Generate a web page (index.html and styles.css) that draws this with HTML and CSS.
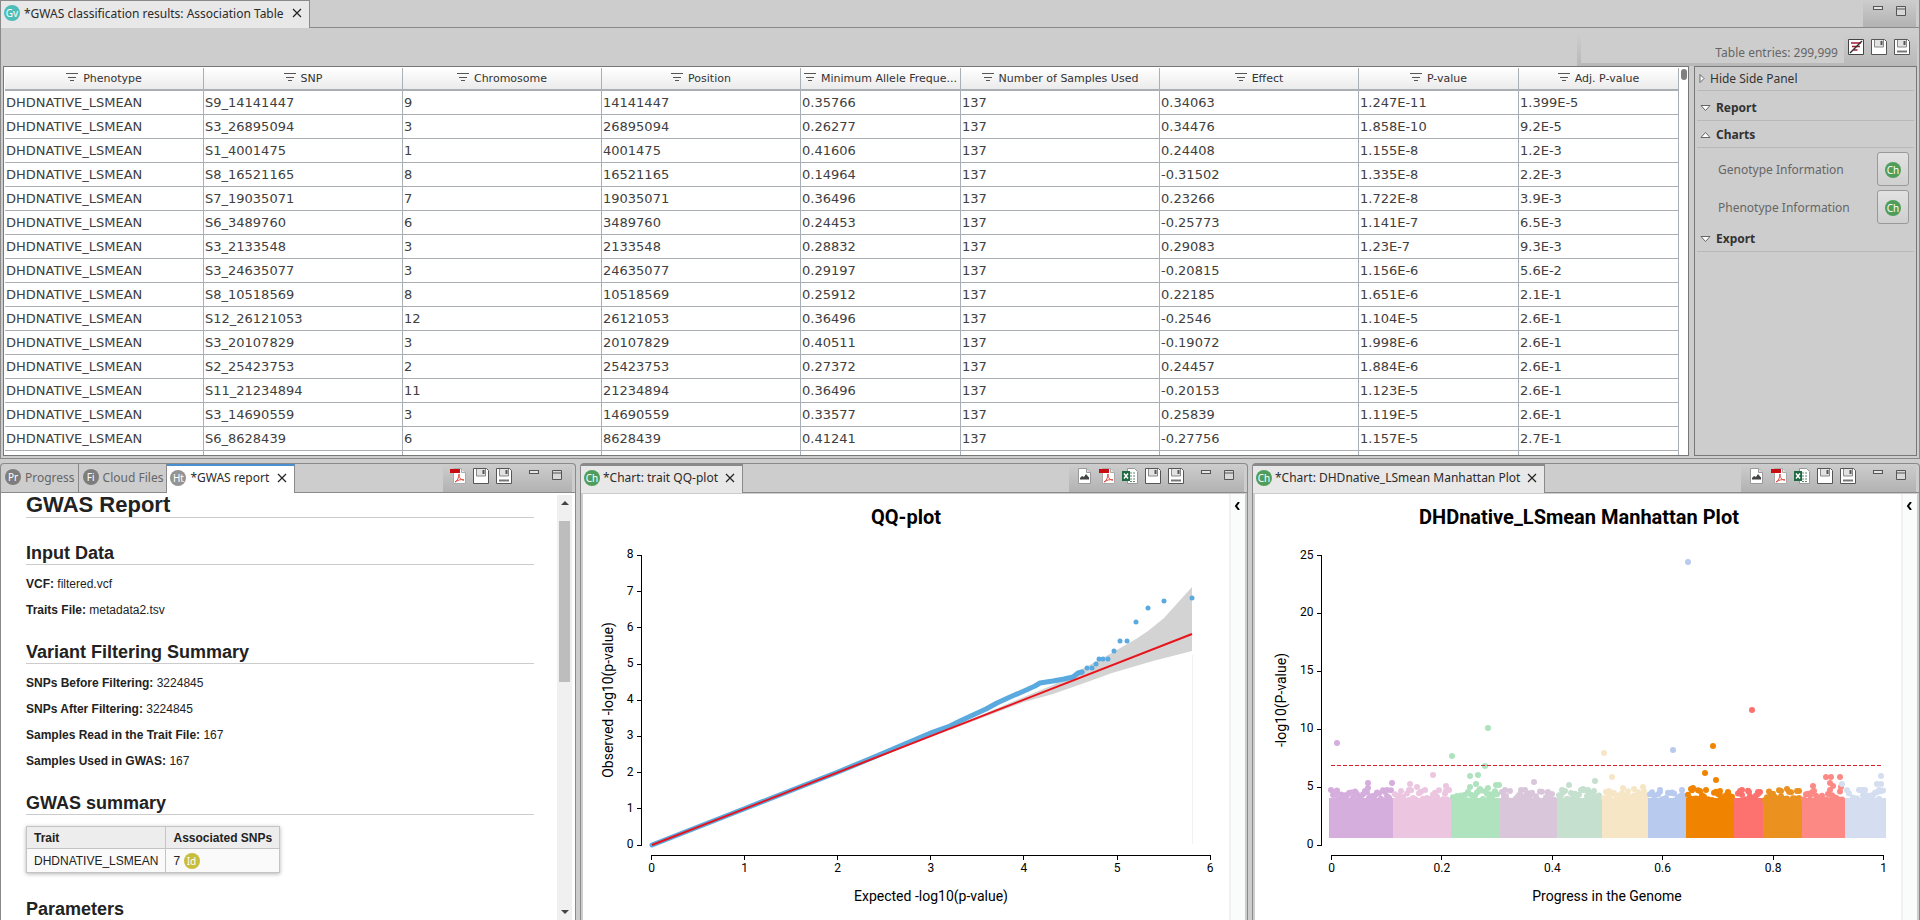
FILE: index.html
```html
<!DOCTYPE html>
<html lang="en">
<head>
    <meta charset="UTF-8">
    <meta name="viewport" content="width=device-width, initial-scale=1.0">
    <title>GWAS classification results</title>
    <link rel="stylesheet" href="styles.css">
</head>
<body>
    <svg class="symbols" aria-hidden="true">
        <symbol id="i-close" viewBox="0 0 10 10"><path d="M1 1l8 8M9 1l-8 8" fill="none" stroke="#222" stroke-width="1.2"/></symbol>
        <symbol id="i-min" viewBox="0 0 16 16"><rect x="3.500" y="2.500" width="9" height="3" fill="#e4e4e4" stroke="#555"/></symbol>
        <symbol id="i-max" viewBox="0 0 16 16"><path d="M3.500 2.500h9v9h-9z" fill="#d8d8d8" stroke="#555"/><path d="M3 5h10" stroke="#555"/></symbol>
        <symbol id="i-save" viewBox="0 0 16 16"><path d="M.5.500h13l2 2v13H.5z" fill="#fff" stroke="#555"/><path d="M3.500 1v7h9V1" fill="#e2e2e2" stroke="#888"/><path d="M10.500 2v4" stroke="#555" stroke-width="2"/></symbol>
        <symbol id="i-saveas" viewBox="0 0 16 16"><path d="M.5.500h13l2 2v13H.5z" fill="#fff" stroke="#555"/><path d="M3.500 1v7h9V1" fill="#e2e2e2" stroke="#888"/><path d="M10.500 2v4" stroke="#555" stroke-width="2"/><path d="M3 12.500h10" stroke="#777" stroke-width="2"/></symbol>
        <symbol id="i-nofilter" viewBox="0 0 16 16"><path d="M.5.500h15v15H.5z" fill="#fff" stroke="#444"/><path d="M3 4h10M4 7.500h8M5.500 11h4" stroke="#a11c2c" stroke-width="1.500"/><path d="M14 2L2 14" stroke="#333" stroke-width="1.500"/></symbol>
        <symbol id="i-image" viewBox="0 0 16 16"><path d="M2.500.500h8l4 4v11h-12z" fill="#fff" stroke="#999"/><path d="M10.500.500v4h4" fill="#ddd" stroke="#999"/><path d="M4 11.500V10l2-2 2 1 2-3 3 3.500v2z" fill="#444"/></symbol>
        <symbol id="i-pdf" viewBox="0 0 16 16"><path d="M3.500.500h8l4 4v11h-12z" fill="#fff" stroke="#aaa"/><path d="M11.500.500v4h4" fill="#e4e4e4" stroke="#aaa"/><path d="M0 1h10v4H0z" fill="#c80d12"/><path d="M5 14c2-1 4-4 4-8 0 4 2 6 5 6-3-1-6 0-9 2z" fill="none" stroke="#e0483f"/></symbol>
        <symbol id="i-excel" viewBox="0 0 16 16"><path d="M5.500.500h7l3 3v12h-10z" fill="#fff" stroke="#999"/><path d="M8 5h6M8 8h6M8 11h6M8 13.500h6" stroke="#5d8b72" stroke-dasharray="2 1"/><path d="M0 3h8v10H0z" fill="#1d6b43"/><path d="M2 5.500l4 5M6 5.500l-4 5" stroke="#fff" stroke-width="1.500"/></symbol>
        <symbol id="i-lines" viewBox="0 0 12 10"><path d="M0 1.500h12M2 5.500h8M4 8.500h4" stroke="#555"/></symbol>
        <symbol id="i-down" viewBox="0 0 11 11"><path d="M1 3.500h9l-4.500 5z" fill="#fff" stroke="#666"/></symbol>
        <symbol id="i-up" viewBox="0 0 11 11"><path d="M1 8.500h9l-4.500-5z" fill="#fff" stroke="#666"/></symbol>
        <symbol id="i-right" viewBox="0 0 6 11"><path d="M1 1.500v8l4-4z" fill="#fff" stroke="#666"/></symbol>
        <symbol id="i-chevron" viewBox="0 0 8 8"><path d="M6 0L3 4l3 4" fill="none" stroke="#000" stroke-width="2"/></symbol>
    </svg>

    <section class="results">
        <header class="tab-bar">
            <div class="tab tab-open"><span class="badge teal">Gv</span>*GWAS classification results: Association Table <button class="close" aria-label="Close"><svg><use href="#i-close"/></svg></button></div>
            <div class="trim">
                <button class="tool" aria-label="Minimize"><svg><use href="#i-min"/></svg></button>
                <button class="tool" aria-label="Maximize"><svg><use href="#i-max"/></svg></button>
            </div>
        </header>
        <div class="toolbar">
            <div class="trim table-trim">
                <span class="entries">Table entries: 299,999</span>
                <button class="tool" aria-label="Clear filter"><svg><use href="#i-nofilter"/></svg></button>
                <button class="tool" aria-label="Save"><svg><use href="#i-save"/></svg></button>
                <button class="tool" aria-label="Save as"><svg><use href="#i-saveas"/></svg></button>
            </div>
        </div>
        <div class="results-body">
            <div class="table-frame">
                <table class="snp-table">
                    <colgroup>
                        <col class="wide"><col class="wide"><col class="wide"><col class="wide"><col class="narrow"><col class="wide"><col class="wide"><col class="narrow"><col class="narrow">
                    </colgroup>
                    <thead>
                        <tr>
                            <th><svg><use href="#i-lines"/></svg>Phenotype</th>
                            <th><svg><use href="#i-lines"/></svg>SNP</th>
                            <th><svg><use href="#i-lines"/></svg>Chromosome</th>
                            <th><svg><use href="#i-lines"/></svg>Position</th>
                            <th><svg><use href="#i-lines"/></svg>Minimum Allele Freque...</th>
                            <th><svg><use href="#i-lines"/></svg>Number of Samples Used</th>
                            <th><svg><use href="#i-lines"/></svg>Effect</th>
                            <th><svg><use href="#i-lines"/></svg>P-value</th>
                            <th><svg><use href="#i-lines"/></svg>Adj. P-value</th>
                        </tr>
                    </thead>
                    <tbody>
                        <tr><td>DHDNATIVE_LSMEAN</td><td>S9_14141447</td><td>9</td><td>14141447</td><td>0.35766</td><td>137</td><td>0.34063</td><td>1.247E-11</td><td>1.399E-5</td></tr>
                        <tr><td>DHDNATIVE_LSMEAN</td><td>S3_26895094</td><td>3</td><td>26895094</td><td>0.26277</td><td>137</td><td>0.34476</td><td>1.858E-10</td><td>9.2E-5</td></tr>
                        <tr><td>DHDNATIVE_LSMEAN</td><td>S1_4001475</td><td>1</td><td>4001475</td><td>0.41606</td><td>137</td><td>0.24408</td><td>1.155E-8</td><td>1.2E-3</td></tr>
                        <tr><td>DHDNATIVE_LSMEAN</td><td>S8_16521165</td><td>8</td><td>16521165</td><td>0.14964</td><td>137</td><td>-0.31502</td><td>1.335E-8</td><td>2.2E-3</td></tr>
                        <tr><td>DHDNATIVE_LSMEAN</td><td>S7_19035071</td><td>7</td><td>19035071</td><td>0.36496</td><td>137</td><td>0.23266</td><td>1.722E-8</td><td>3.9E-3</td></tr>
                        <tr><td>DHDNATIVE_LSMEAN</td><td>S6_3489760</td><td>6</td><td>3489760</td><td>0.24453</td><td>137</td><td>-0.25773</td><td>1.141E-7</td><td>6.5E-3</td></tr>
                        <tr><td>DHDNATIVE_LSMEAN</td><td>S3_2133548</td><td>3</td><td>2133548</td><td>0.28832</td><td>137</td><td>0.29083</td><td>1.23E-7</td><td>9.3E-3</td></tr>
                        <tr><td>DHDNATIVE_LSMEAN</td><td>S3_24635077</td><td>3</td><td>24635077</td><td>0.29197</td><td>137</td><td>-0.20815</td><td>1.156E-6</td><td>5.6E-2</td></tr>
                        <tr><td>DHDNATIVE_LSMEAN</td><td>S8_10518569</td><td>8</td><td>10518569</td><td>0.25912</td><td>137</td><td>0.22185</td><td>1.651E-6</td><td>2.1E-1</td></tr>
                        <tr><td>DHDNATIVE_LSMEAN</td><td>S12_26121053</td><td>12</td><td>26121053</td><td>0.36496</td><td>137</td><td>-0.2546</td><td>1.104E-5</td><td>2.6E-1</td></tr>
                        <tr><td>DHDNATIVE_LSMEAN</td><td>S3_20107829</td><td>3</td><td>20107829</td><td>0.40511</td><td>137</td><td>-0.19072</td><td>1.998E-6</td><td>2.6E-1</td></tr>
                        <tr><td>DHDNATIVE_LSMEAN</td><td>S2_25423753</td><td>2</td><td>25423753</td><td>0.27372</td><td>137</td><td>0.24457</td><td>1.884E-6</td><td>2.6E-1</td></tr>
                        <tr><td>DHDNATIVE_LSMEAN</td><td>S11_21234894</td><td>11</td><td>21234894</td><td>0.36496</td><td>137</td><td>-0.20153</td><td>1.123E-5</td><td>2.6E-1</td></tr>
                        <tr><td>DHDNATIVE_LSMEAN</td><td>S3_14690559</td><td>3</td><td>14690559</td><td>0.33577</td><td>137</td><td>0.25839</td><td>1.119E-5</td><td>2.6E-1</td></tr>
                        <tr><td>DHDNATIVE_LSMEAN</td><td>S6_8628439</td><td>6</td><td>8628439</td><td>0.41241</td><td>137</td><td>-0.27756</td><td>1.157E-5</td><td>2.7E-1</td></tr>
                        <tr><td></td><td></td><td></td><td></td><td></td><td></td><td></td><td></td><td></td></tr>
                    </tbody>
                </table>
                <div class="table-scroll"><div class="table-thumb"></div></div>
            </div>
            <aside class="side-panel">
                <button class="side-row hide-row"><svg class="arrow-right"><use href="#i-right"/></svg>Hide Side Panel</button>
                <button class="side-row group"><svg class="arrow"><use href="#i-down"/></svg>Report</button>
                <button class="side-row group"><svg class="arrow"><use href="#i-up"/></svg>Charts</button>
                <div class="chart-list">
                    <div class="chart-item"><label for="genotype">Genotype Information</label><button id="genotype" class="chart-btn"><span class="badge green">Ch</span></button></div>
                    <div class="chart-item"><label for="phenotype">Phenotype Information</label><button id="phenotype" class="chart-btn"><span class="badge green">Ch</span></button></div>
                </div>
                <button class="side-row group"><svg class="arrow"><use href="#i-down"/></svg>Export</button>
            </aside>
        </div>
    </section>

    <main class="panels">
        <section class="panel">
            <header class="tab-bar">
                <div class="tab tab-idle"><span class="badge grey">Pr</span>Progress</div>
                <div class="tab tab-idle"><span class="badge grey">Fi</span>Cloud Files</div>
                <div class="tab tab-active"><span class="badge silver">Ht</span>*GWAS report <button class="close" aria-label="Close"><svg><use href="#i-close"/></svg></button></div>
                <div class="trim">
                    <button class="tool" aria-label="Export PDF"><svg><use href="#i-pdf"/></svg></button>
                    <button class="tool" aria-label="Save"><svg><use href="#i-save"/></svg></button>
                    <button class="tool" aria-label="Save as"><svg><use href="#i-saveas"/></svg></button>
                    <button class="tool window" aria-label="Minimize"><svg><use href="#i-min"/></svg></button>
                    <button class="tool" aria-label="Maximize"><svg><use href="#i-max"/></svg></button>
                </div>
            </header>
            <div class="report-body">
                <article class="report">
                    <h1>GWAS Report</h1>
                    <h2>Input Data</h2>
                    <p><b>VCF:</b> filtered.vcf</p>
                    <p><b>Traits File:</b> metadata2.tsv</p>
                    <h2>Variant Filtering Summary</h2>
                    <p><b>SNPs Before Filtering:</b> 3224845</p>
                    <p><b>SNPs After Filtering:</b> 3224845</p>
                    <p><b>Samples Read in the Trait File:</b> 167</p>
                    <p><b>Samples Used in GWAS:</b> 167</p>
                    <h2>GWAS summary</h2>
                    <table class="summary">
                        <tr><th>Trait</th><th>Associated SNPs</th></tr>
                        <tr><td>DHDNATIVE_LSMEAN</td><td>7 <span class="badge olive">Id</span></td></tr>
                    </table>
                    <h2>Parameters</h2>
                </article>
                <div class="scrollbar">
                    <svg class="scroll-arrow" viewBox="0 0 8 4"><path d="M0 4h8L4 0z" fill="#444"/></svg>
                    <div class="scroll-track"><div class="scroll-thumb"></div></div>
                    <svg class="scroll-arrow" viewBox="0 0 8 4"><path d="M0 0h8L4 4z" fill="#444"/></svg>
                </div>
            </div>
        </section>

        <section class="panel">
            <header class="tab-bar">
                <div class="tab tab-open"><span class="badge green">Ch</span>*Chart: trait QQ-plot <button class="close" aria-label="Close"><svg><use href="#i-close"/></svg></button></div>
                <div class="trim">
                    <button class="tool" aria-label="Export image"><svg><use href="#i-image"/></svg></button>
                    <button class="tool" aria-label="Export PDF"><svg><use href="#i-pdf"/></svg></button>
                    <button class="tool" aria-label="Export Excel"><svg><use href="#i-excel"/></svg></button>
                    <button class="tool" aria-label="Save"><svg><use href="#i-save"/></svg></button>
                    <button class="tool" aria-label="Save as"><svg><use href="#i-saveas"/></svg></button>
                    <button class="tool window" aria-label="Minimize"><svg><use href="#i-min"/></svg></button>
                    <button class="tool" aria-label="Maximize"><svg><use href="#i-max"/></svg></button>
                </div>
            </header>
            <div class="chart-body">
                <svg id="qq" class="chart" viewBox="0 0 646 425" preserveAspectRatio="xMidYMin meet">
                    <text class="chart-title" x="323" y="30">QQ-plot</text>
                    <text class="axis-title" x="348" y="407">Expected -log10(p-value)</text>
                    <text class="axis-title" transform="translate(30 206) rotate(-90)">Observed -log10(p-value)</text>
                </svg>
                <button class="drawer" aria-label="Open chart settings"><svg><use href="#i-chevron"/></svg></button>
            </div>
        </section>

        <section class="panel">
            <header class="tab-bar">
                <div class="tab tab-open"><span class="badge green">Ch</span>*Chart: DHDnative_LSmean Manhattan Plot <button class="close" aria-label="Close"><svg><use href="#i-close"/></svg></button></div>
                <div class="trim">
                    <button class="tool" aria-label="Export image"><svg><use href="#i-image"/></svg></button>
                    <button class="tool" aria-label="Export PDF"><svg><use href="#i-pdf"/></svg></button>
                    <button class="tool" aria-label="Export Excel"><svg><use href="#i-excel"/></svg></button>
                    <button class="tool" aria-label="Save"><svg><use href="#i-save"/></svg></button>
                    <button class="tool" aria-label="Save as"><svg><use href="#i-saveas"/></svg></button>
                    <button class="tool window" aria-label="Minimize"><svg><use href="#i-min"/></svg></button>
                    <button class="tool" aria-label="Maximize"><svg><use href="#i-max"/></svg></button>
                </div>
            </header>
            <div class="chart-body">
                <svg id="manhattan" class="chart" viewBox="0 0 646 425" preserveAspectRatio="xMidYMin meet">
                    <text class="chart-title" x="324" y="30">DHDnative_LSmean Manhattan Plot</text>
                    <text class="axis-title" x="352" y="407">Progress in the Genome</text>
                    <text class="axis-title" transform="translate(31 206) rotate(-90)">-log10(P-value)</text>
                </svg>
                <button class="drawer" aria-label="Open chart settings"><svg><use href="#i-chevron"/></svg></button>
            </div>
        </section>
    </main>
    <script src="charts.js"></script>
</body>
</html>
```

FILE: styles.css
```css
:root {
    --bg: #cdcdcd;
    --line: #8a8a8a;
    --text: #333;
    --muted: #666;
    --ui-font: "Noto Sans", sans-serif;
    --grid: #a9afb5;
}

* {
    box-sizing: border-box;
}

body {
    margin: 0;
    height: 100vh;
    display: flex;
    flex-direction: column;
    gap: 4px;
    overflow: hidden;
    background: var(--bg);
    color: var(--text);
    font-family: var(--ui-font);
    font-size: 12px;
}

button {
    font: inherit;
    color: inherit;
    border: none;
    padding: 0;
    background: none;
}

.symbols {
    display: none;
}

/* tabs */
.tab-bar {
    display: flex;
    flex: none;
    height: 29px;
    border-bottom: 1px solid var(--line);
}

.tab {
    display: flex;
    align-items: center;
    gap: 4px;
    padding: 0 3px 2px;
    margin-bottom: -1px;
    border-right: 1px solid var(--line);
    color: #2b2b2b;
    white-space: nowrap;
}

.panel .tab-open {
    gap: 3px;
}

.tab-idle {
    margin-bottom: 0;
    padding-left: 4px;
    color: var(--muted);
}

.tab-open,
.tab-active {
    padding-right: 7px;
    padding-bottom: 4px;
    background: #e8e8e8;
    border-top: 2px solid var(--line);
}

.tab-active {
    background: #fff;
    border-top-color: #4a90d0;
}

.close {
    display: flex;
    margin-left: 4px;
}

.close svg {
    width: 10px;
    height: 10px;
}

.badge {
    display: inline-flex;
    align-items: center;
    justify-content: center;
    width: 16px;
    height: 16px;
    border-radius: 50%;
    color: #fff;
    font: 10px/16px "Noto Sans", sans-serif;
}

.teal { background: #4cbdb9; }
.green { background: #4f9d5b; }
.grey { background: #7d7d7d; }
.silver { background: #949494; }
.olive { background: #c8bd3c; }

.trim {
    display: flex;
    align-items: flex-start;
    gap: 7px;
    margin-left: auto;
    margin-right: 3px;
    padding: 4px 7px 0;
    background: linear-gradient(#cdcdcd, #b2b2b2);
}

.tool {
    width: 16px;
    height: 16px;
}

.tool svg {
    display: block;
    width: 16px;
    height: 16px;
}

.window {
    margin-left: 7px;
}

/* results table */
.results {
    flex: none;
    display: flex;
    flex-direction: column;
    height: calc(50vh - 1px);
    border: 1px solid var(--line);
    border-top: none;
}

.results .tab-bar {
    height: 28px;
}

.results .tab-open {
    border-top-width: 1px;
    padding-bottom: 3px;
}

.toolbar {
    display: flex;
    flex: none;
    height: 38px;
    padding-top: 6px;
}

.table-trim {
    width: 340px;
    margin-right: 2px;
    padding-top: 5px;
    background: linear-gradient(#cdcdcd, #b8b8b8);
}

.entries {
    flex: 1;
    margin: -5px -3px 3px -3px;
    padding: 11px 6px 2px 0;
    background: var(--bg);
    color: var(--muted);
    text-align: right;
    line-height: 16px;
}

.results-body {
    flex: 1;
    display: flex;
    gap: 5px;
    min-height: 0;
    padding: 0 2px 2px;
}

.table-frame {
    flex: 1;
    display: flex;
    min-width: 0;
    overflow: hidden;
    background: #fff;
    border: 1px solid #777;
    padding: 1px 0 0 1px;
}

.snp-table {
    flex: 1;
    align-self: flex-start;
    table-layout: fixed;
    width: 100%;
    border-collapse: separate;
    border-spacing: 0;
    font-family: "DejaVu Sans", sans-serif;
    font-size: 13px;
}

.wide { width: 199px; }
.narrow { width: 160px; }

.snp-table th {
    height: 23px;
    padding: 0;
    border-right: 1px solid var(--grid);
    border-bottom: 2px solid var(--grid);
    background: linear-gradient(#fff, #ebebeb);
    font-size: 11px;
    font-weight: normal;
    white-space: nowrap;
}

.snp-table th svg {
    width: 12px;
    height: 10px;
    margin-right: 5px;
}

.snp-table td {
    height: 24px;
    padding: 1px 1px 0;
    border-right: 1px solid var(--grid);
    border-bottom: 1px solid var(--grid);
    color: #404040;
    line-height: 18px;
}

.table-scroll {
    flex: none;
    width: 9px;
    padding: 1px 1px 0 2px;
}

.table-thumb {
    height: 11px;
    border-radius: 3px;
    background: #808080;
}

/* side panel */
.side-panel {
    flex: none;
    width: 223px;
    padding: 0 2px;
    border: 1px solid #777;
}

.side-row {
    display: flex;
    align-items: center;
    width: 100%;
    height: 27px;
    padding-left: 5px;
    border-bottom: 1px solid #b8b8b8;
}

.hide-row {
    height: 24px;
    padding-left: 2px;
    gap: 5px;
    margin-bottom: 3px;
}

.group {
    gap: 5px;
    padding-left: 3px;
    font-weight: bold;
}

.arrow {
    width: 11px;
    height: 11px;
}

.arrow-right {
    width: 6px;
    height: 11px;
}

.chart-list {
    display: flex;
    flex-direction: column;
    gap: 4px;
    padding: 4px 5px 1px 21px;
}

.chart-item {
    display: flex;
    align-items: center;
    justify-content: space-between;
    color: var(--muted);
}

.chart-btn {
    width: 32px;
    height: 34px;
    border: 1px solid #999;
    border-radius: 3px;
    background: linear-gradient(#e2e2e2, #cfcfcf);
}

/* lower panels */
.panels {
    flex: 1;
    display: grid;
    grid-template-columns: 30% minmax(0, 1fr) minmax(0, 1fr);
    gap: 4px;
    min-height: 0;
}

.panel {
    display: flex;
    flex-direction: column;
    min-width: 0;
    min-height: 0;
    border: 1px solid var(--line);
    border-bottom: none;
    border-radius: 4px 4px 0 0;
}

.report-body {
    flex: 1;
    display: flex;
    min-height: 0;
    padding-right: 3px;
    background: #fff;
}

.report {
    flex: 1;
    overflow: hidden;
    padding: 0 23px 0 25px;
    color: #222;
    font-family: "Liberation Sans", Arial, sans-serif;
}

.report h1 {
    margin: 0 0 24px;
    border-bottom: 1px solid #ccc;
    font-size: 22px;
    line-height: 24px;
}

.report h2 {
    margin: 23px 0 11px;
    border-bottom: 1px solid #ccc;
    font-size: 18px;
    line-height: 22px;
}

.report p {
    margin: 0 0 10px;
    line-height: 16px;
}

.summary {
    margin-bottom: 25px;
    border-collapse: collapse;
    box-shadow: 0 1px 4px rgba(0, 0, 0, 0.3);
}

.summary th,
.summary td {
    height: 24px;
    padding: 0 7px;
    border: 1px solid #c4c4c4;
    text-align: left;
}

.summary th {
    height: 22px;
    background: #ededed;
}

.summary td {
    background: #fafafa;
}

.scrollbar {
    display: flex;
    flex-direction: column;
    align-items: center;
    width: 15px;
    margin-top: 2px;
    background: #f0f0f0;
}

.scroll-arrow {
    width: 8px;
    height: 4px;
    margin: 6px 0;
}

.scroll-track {
    flex: 1;
    width: 11px;
    padding-top: 10px;
}

.scroll-thumb {
    height: 42%;
    background: #bdbdbd;
}

/* charts */
.chart-body {
    flex: 1;
    display: flex;
    min-height: 0;
    margin: 1px 2px 0;
    background: #fff;
}

.chart {
    flex: 1;
    min-width: 0;
    font-family: Roboto, sans-serif;
}

.drawer {
    flex: none;
    align-self: stretch;
    display: flex;
    justify-content: center;
    width: 16px;
    padding: 8px 3px 0 0;
    border-left: 2px solid #f0f2f2;
    background: #fafbfb;
}

.drawer svg {
    width: 8px;
    height: 8px;
}

.chart-title {
    font-size: 20px;
    font-weight: bold;
    text-anchor: middle;
}

.axis-title {
    font-size: 14px;
    text-anchor: middle;
}

.tick-label {
    font-size: 12px;
    text-anchor: middle;
}

.tick-label.left {
    text-anchor: end;
}

.axis {
    fill: none;
    stroke: #000;
    shape-rendering: crispEdges;
}

.band { fill: #d3d3d3; }
.band-edge { stroke: #f1f1f1; }
.observed {
    fill: none;
    stroke: #5aaae0;
    stroke-width: 5;
    stroke-linejoin: round;
    stroke-linecap: round;
}
.qq-dot { fill: #5aaae0; }
.expected { stroke: #e8141c; stroke-width: 2; }
.threshold { stroke: #d6202c; stroke-dasharray: 4 2; }
```

FILE: charts.js
```js
const NS = 'http://www.w3.org/2000/svg';

function add(parent, tag, attrs, text) {
    const el = document.createElementNS(NS, tag);
    for (const key in attrs) el.setAttribute(key, attrs[key]);
    if (text !== undefined) el.textContent = text;
    parent.appendChild(el);
    return el;
}

function axes(svg, left, xTicks, x0, xStep, yTicks, yStep) {
    const bottom = 351;
    const top = bottom - yStep * (yTicks.length - 1);
    add(svg, 'path', { class: 'axis', d: `M${left} ${top}V${bottom}` });
    yTicks.forEach((label, i) => {
        const y = bottom - i * yStep;
        add(svg, 'path', { class: 'axis', d: `M${left - 5} ${y}H${left}` });
        add(svg, 'text', { class: 'tick-label left', x: left - 8, y: y + 3 }, label);
    });
    add(svg, 'path', { class: 'axis', d: `M${x0} 361H${x0 + xStep * (xTicks.length - 1)}` });
    xTicks.forEach((label, i) => {
        const x = x0 + i * xStep;
        add(svg, 'path', { class: 'axis', d: `M${x} 361v5` });
        add(svg, 'text', { class: 'tick-label', x: x, y: 378 }, label);
    });
}

// QQ plot
const qq = document.getElementById('qq');
add(qq, 'polygon', { class: 'band', points: '367,234 441,203 470,191 490,180 525,161 553,145 565,137 581,124 609,93 609,157 570,167 529,179 507,187 470,200 441,208 367,236' });
add(qq, 'path', { class: 'band-edge', d: 'M609.500 161V350' });
add(qq, 'polyline', { class: 'observed', points: '69,351 162,314.500 255,278 290,263.500 330,246.500 350,238 367,232 377,227 390,221 403,215 414,209 427,203 441,197 452,192 457,189 470,187 481,185 490,183 495,179 499,178' });
const qqDots = [[499, 178], [504, 174], [509, 174], [513, 170], [516, 165], [520, 165], [525, 165], [531, 157], [537, 147], [544, 147], [553, 128], [565, 114], [581, 107], [609, 104]];
qqDots.forEach(([x, y]) => add(qq, 'circle', { class: 'qq-dot', cx: x, cy: y, r: 2.5 }));
add(qq, 'path', { class: 'expected', d: 'M69 351L609 140' });
axes(qq, 58.5, [0, 1, 2, 3, 4, 5, 6], 68.5, 93.1, [0, 1, 2, 3, 4, 5, 6, 7, 8], 36.2);

// Manhattan plot: one block per chromosome, [start, end, colour]
const chromosomes = [
    [74, 138, '#d5aedd'], [138, 196, '#ecc6e0'], [196, 245, '#aee3be'], [245, 302, '#d9c6db'],
    [302, 347, '#c6e0cf'], [347, 393, '#f6e6c6'], [393, 431, '#b9caef'], [431, 479, '#f08400'],
    [479, 508, '#fd716e'], [508, 547, '#ea9120'], [547, 590, '#fd8985'], [590, 631, '#d4def0']
];
const peaks = [
    [[82, 249], [113, 289], [113, 294], [137, 289], [132, 296], [101, 299], [79, 298], [81, 301]],
    [[155, 290], [162, 293], [178, 281], [170, 296], [191, 292], [191, 297], [154, 296]],
    [[197, 262], [233, 234], [230, 272], [215, 282], [223, 281], [221, 290], [233, 294], [241, 291], [244, 291], [215, 293], [225, 295], [213, 298]],
    [[279, 288], [250, 296], [266, 296], [270, 296], [293, 298]],
    [[314, 291], [307, 296], [340, 287], [328, 295], [333, 296], [339, 297]],
    [[349, 259], [357, 283], [368, 294], [379, 295], [388, 293], [354, 297]],
    [[405, 296], [427, 296], [418, 256], [433, 68]],
    [[458, 252], [450, 279], [461, 286], [436, 295], [438, 294], [445, 297], [465, 297], [473, 299]],
    [[497, 216], [487, 296], [494, 298], [503, 298]],
    [[516, 300], [532, 295], [526, 297], [544, 297]],
    [[558, 292], [571, 283], [576, 283], [575, 289], [585, 283], [586, 293], [578, 292], [575, 296]],
    [[587, 290], [626, 282], [622, 290], [626, 290], [608, 296], [624, 296]]
];
let seed = 11;
function rand() {
    seed = (seed * 16807) % 2147483647;
    return seed / 2147483647;
}

const manhattan = document.getElementById('manhattan');
chromosomes.forEach(([start, end, colour], i) => {
    const group = add(manhattan, 'g', { fill: colour });
    add(group, 'rect', { x: start, y: 304, width: end - start, height: 40 });
    for (let x = start + 2; x < end - 1; x += 2) {
        add(group, 'circle', { cx: x, cy: 296 + rand() * 11, r: 3 });
    }
    peaks[i].forEach(([x, y]) => add(group, 'circle', { cx: x, cy: y, r: 3 }));
});
add(manhattan, 'path', { class: 'threshold', d: 'M76 271.500H628' });
axes(manhattan, 66.5, [0, 0.2, 0.4, 0.6, 0.8, 1], 76.5, 110.4, [0, 5, 10, 15, 20, 25], 57.9);
```
